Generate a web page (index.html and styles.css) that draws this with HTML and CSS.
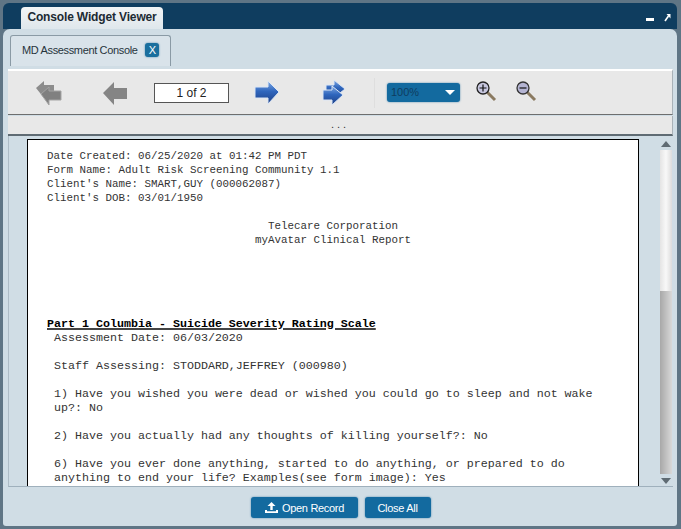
FILE: index.html
```html
<!DOCTYPE html>
<html>
<head>
  <meta charset="UTF-8">
  <title>Console Widget Viewer</title>
  <link rel="stylesheet" href="styles.css">
</head>
<body>
<div class="window">
  <div class="titlebar">
    <div class="title-tab">Console Widget Viewer</div>
    <div class="win-controls">
      <span class="win-min"></span>
      <svg width="7" height="9" viewBox="0 0 7 9"><path d="M1 8 L4.500 3" stroke="#fff" stroke-width="1.600"/><path d="M2.500 1 H6.500 V5.500 Z" fill="#fff"/></svg>
    </div>
  </div>
  <div class="panel">
    <div class="tabstrip">
      <div class="tab">MD Assessment Console <span class="tab-close">X</span></div>
    </div>
    <div class="toolbar">
      <svg class="nav nav-first" width="30" height="28" viewBox="0 0 30 28">
        <path d="M2 9 L10 2 V6 H20 V15 H10 V19 Z" fill="#8c8c8c"/>
        <path d="M7 15 L15 8 V12 H27 V21 H15 V26 Z" fill="#808080" stroke="#a4a4a4"/>
      </svg>
      <svg class="nav nav-prev" width="28" height="28" viewBox="0 0 28 28">
        <path d="M2 14 L13 3 V9 H26 V20 H13 V26 Z" fill="#858585"/>
      </svg>
      <div class="page-box">1 of 2</div>
      <svg class="nav nav-next" width="28" height="28" viewBox="0 0 28 28">
        <defs>
          <linearGradient id="blue" x1="0" y1="0" x2="0" y2="1">
            <stop offset="0" stop-color="#7fa9e4"/>
            <stop offset="0.45" stop-color="#2f66bd"/>
            <stop offset="1" stop-color="#1d3f86"/>
          </linearGradient>
        </defs>
        <path d="M2 8 H15 V2 L26 13 L15 25 V19 H2 Z" fill="url(#blue)" stroke="#dbe6f5"/>
      </svg>
      <svg class="nav nav-last" width="26" height="28" viewBox="0 0 26 28">
        <path d="M5 6 H13 V1 L24 10 L14 18 H5 Z" fill="url(#blue)" stroke="#dbe6f5"/>
        <path d="M2 11 H11 V7 L22 16 L11 26 V21 H2 Z" fill="url(#blue)" stroke="#dbe6f5"/>
      </svg>
      <span class="tool-sep"></span>
      <div class="zoom-select">100%<span class="caret"></span></div>
      <svg class="mag mag-in" width="22" height="22" viewBox="0 0 22 22">
        <path d="M12 12 L20 20" stroke="#8a7a60" stroke-width="3"/>
        <circle cx="8" cy="8" r="6" fill="#c6c6de" stroke="#222" stroke-width="1.300"/>
        <path d="M4.500 8 H11.500 M8 4.500 V11.500" stroke="#111" stroke-width="1.200"/>
      </svg>
      <svg class="mag" width="22" height="22" viewBox="0 0 22 22">
        <path d="M12 12 L20 20" stroke="#8a7a60" stroke-width="3"/>
        <circle cx="8" cy="8" r="6" fill="#b4b4d2" stroke="#333" stroke-width="1.300"/>
        <path d="M4.500 8 H11.500" stroke="#111" stroke-width="1.200"/>
      </svg>
    </div>
    <div class="divider-bar">...</div>
    <div class="viewer">
      <div class="page">
<pre class="report">Date Created: 06/25/2020 at 01:42 PM PDT
Form Name: Adult Risk Screening Community 1.1
Client's Name: SMART,GUY (000062087)
Client's DOB: 03/01/1950

                                  Telecare Corporation
                                myAvatar Clinical Report





</pre>
<pre class="report report-body"><b class="report-head">Part 1 Columbia - Suicide Severity Rating Scale</b>
 Assessment Date: 06/03/2020

 Staff Assessing: STODDARD,JEFFREY (000980)

 1) Have you wished you were dead or wished you could go to sleep and not wake
 up?: No

 2) Have you actually had any thoughts of killing yourself?: No

 6) Have you ever done anything, started to do anything, or prepared to do
 anything to end your life? Examples(see form image): Yes</pre>
      </div>
      <div class="scrollbar">
        <span class="arrow-up"></span>
        <span class="thumb"></span>
        <span class="track"></span>
        <span class="arrow-down"></span>
      </div>
    </div>
    <div class="footer">
      <button class="btn btn-open">
        <svg width="15" height="13" viewBox="0 0 15 13"><path d="M7.500 1 L3.500 5 H6.300 V9 H8.700 V5 H11.500 Z M1 9 V12 H14 V9 H12 V10.200 H3 V9 Z" fill="#fff"/></svg>
        Open Record
      </button>
      <button class="btn btn-close">Close All</button>
    </div>
  </div>
</div>
</body>
</html>
```
FILE: styles.css
```css
body{
  margin: 0;
  font-family: "Liberation Sans", sans-serif;
}

.window{
  width: 681px;
  height: 529px;
  box-sizing: border-box;
  padding: 3px 4px 3px 3px;
  background: #5f7585;
  display: flex;
  flex-direction: column;
}

.titlebar{
  height: 26px;
  flex: none;
  background: #0f3d5f;
  border-radius: 6px 6px 0 0;
  padding: 4px 6px 0 18px;
  box-sizing: border-box;
  display: flex;
  justify-content: space-between;
}

.title-tab{
  width: 142px;
  height: 22px;
  background: linear-gradient(#f2f4f5, #dfe7ec);
  border-radius: 4px 4px 0 0;
  text-align: center;
  font: bold 12px/20px "Liberation Sans", sans-serif;
  letter-spacing: -0.15px;
  color: #1c2a33;
}

.win-controls{
  display: flex;
  gap: 10px;
  align-items: flex-start;
  padding-top: 6px;
}

.win-min{
  width: 8px;
  height: 3px;
  margin-top: 5px;
  background: #fff;
}

.panel{
  flex: 1;
  min-height: 0;
  background: #d0dde5;
  border-radius: 7px 7px 3px 3px;
  display: flex;
  flex-direction: column;
  padding: 6px 4px 0 5px;
}

.tabstrip{
  height: 34px;
  flex: none;
  padding-left: 2px;
}

.tab{
  width: 161px;
  height: 31px;
  box-sizing: border-box;
  background: #d9e3ea;
  border: 1px solid #8a9aa5;
  border-bottom: none;
  border-radius: 3px 3px 0 0;
  font-size: 11px;
  letter-spacing: -0.35px;
  color: #27343c;
  padding: 5px 0 0 11px;
  line-height: 18px;
  white-space: nowrap;
}

.tab-close{
  display: inline-block;
  width: 14px;
  height: 14px;
  margin-left: 5px;
  background: #1a6f9e;
  border-radius: 3px;
  box-shadow: 0 0 2px #4a86ad;
  color: #fff;
  font-size: 11px;
  line-height: 14px;
  text-align: center;
}

.toolbar{
  height: 46px;
  flex: none;
  box-sizing: border-box;
  background: #e8e8e8;
  border-top: 2px solid #fff;
  border-right: 1px solid #a9b2b8;
  border-bottom: 1px solid #6e6e6e;
  display: flex;
  align-items: center;
  padding-left: 26px;
}

.nav{
  flex: none;
}

.nav-prev{
  margin-left: 37px;
}

.page-box{
  width: 75px;
  height: 20px;
  margin-left: 25px;
  box-sizing: border-box;
  background: #fff;
  border: 1px solid #555;
  text-align: center;
  font-size: 12px;
  line-height: 18px;
  color: #222;
}

.nav-next{
  margin-left: 24px;
}

.nav-last{
  margin-left: 40px;
}

.tool-sep{
  width: 1px;
  height: 30px;
  margin-left: 27px;
  background: #dedede;
}

.zoom-select{
  width: 73px;
  height: 19px;
  margin-left: 12px;
  box-sizing: border-box;
  background: #136a9f;
  border-radius: 3px;
  box-shadow: 0 0 2px #4a86ad;
  color: #0f3d5f;
  font-size: 11px;
  line-height: 18px;
  padding-left: 4px;
  position: relative;
}

.caret{
  position: absolute;
  right: 5px;
  top: 7px;
  border: 5px solid transparent;
  border-top: 5px solid #fff;
  border-bottom: none;
}

.mag{
  margin-left: 18px;
  margin-bottom: 4px;
}

.mag-in{
  margin-left: 15px;
}

.divider-bar{
  height: 20px;
  flex: none;
  box-sizing: border-box;
  margin-top: 1px;
  background: #e8e8e8;
  border-right: 1px solid #a9b2b8;
  border-bottom: 2px solid #5f6b73;
  text-align: center;
  font: 11px/17px "Liberation Sans", sans-serif;
  letter-spacing: 3px;
  color: #333;
}

.viewer{
  height: 351px;
  flex: none;
  display: flex;
  background: #d0dde5;
  border-bottom: 1px solid #9fb0bc;
  border-left: 1px solid #aebcc6;
  box-sizing: border-box;
  overflow: hidden;
}

.page{
  width: 612px;
  flex: none;
  margin: 3px 0 0 18px;
  box-sizing: border-box;
  background: #fff;
  border: 1px solid #000;
  border-width: 1px 1px 0 1px;
  padding: 9px 0 0 19px;
  overflow: hidden;
}

.report{
  margin: 0;
  font: 10.830px/14px "Liberation Mono", monospace;
  color: #333;
}

.report-body{
  font-size: 11.670px;
}

.report-head{
  color: #000;
  text-decoration: underline 2px #444;
}

.scrollbar{
  width: 14px;
  margin: 2px 0 0 20px;
  display: flex;
  flex-direction: column;
  align-items: center;
  padding-bottom: 2px;
}

.arrow-up{
  margin-top: 3px;
  border: 5px solid transparent;
  border-bottom: 6px solid #5f6b73;
  border-top: none;
}

.arrow-down{
  margin-top: 4px;
  border: 5px solid transparent;
  border-top: 6px solid #5f6b73;
  border-bottom: none;
}

.thumb{
  width: 12px;
  height: 141px;
  margin-top: 3px;
  flex: none;
  background: linear-gradient(to right, #e4e4e4, #f8f8f8 50%, #dcdcdc);
}

.track{
  width: 12px;
  flex: 1;
  background: linear-gradient(to right, #a8a8a8, #d8d8d8);
}

.footer{
  flex: 1;
  display: flex;
  justify-content: center;
  gap: 7px;
  padding-top: 10px;
  align-items: flex-start;
}

.btn{
  height: 21px;
  padding: 0;
  border: none;
  border-radius: 3px;
  background: #136a9f;
  box-shadow: 0 0 2px #4a86ad;
  color: #fff;
  font: 11px "Liberation Sans", sans-serif;
  letter-spacing: -0.3px;
  display: flex;
  align-items: center;
  justify-content: center;
  gap: 3px;
}

.btn-open{
  width: 107px;
}

.btn-close{
  width: 66px;
}
```
